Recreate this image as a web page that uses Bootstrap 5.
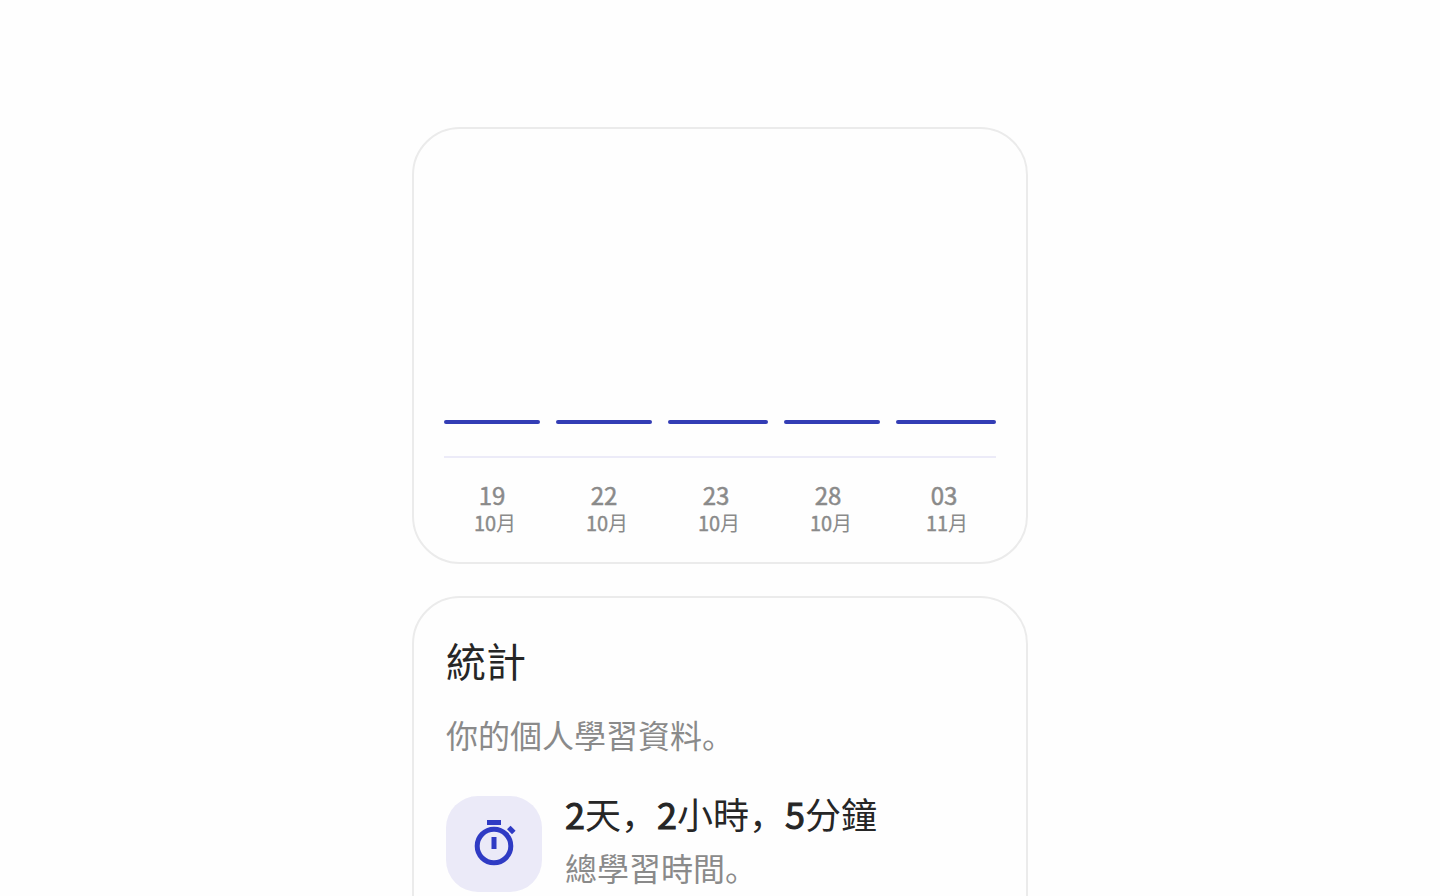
<!DOCTYPE html>
<html lang="zh">
<head>
<meta charset="utf-8">
<meta name="viewport" content="width=device-width, initial-scale=1">
<title>統計</title>
<link href="https://cdn.jsdelivr.net/npm/bootstrap@5.3.0/dist/css/bootstrap.min.css" rel="stylesheet">
<style>
  body { background: #fefefe; color: #262626; font-family: "Noto Sans CJK SC", "Noto Sans CJK TC", sans-serif; }
  .stats-page { max-width: 616px; padding-top: 127px; }
  .panel { border: 2px solid #ebebeb; border-radius: 48px; background: #fefefe; }
  .muted-text { color: #8a8a8a; }
  .chart-panel { padding: 30px 30px 25px; }
  .bar-plot { display: grid; grid-template-columns: 24fr 24fr 25fr 24fr 25fr; height: 265px; align-items: end; gap: 16px; }
  .study-bar { height: 4px; border-radius: 2px; background: #333db5; }
  .axis-line { height: 2px; margin-top: 32px; background: #ecebf8; }
  .axis-labels { display: grid; grid-template-columns: 12fr 12fr 12fr 12fr 13fr; column-gap: 16px; margin-top: 23px; text-align: center; }
  .axis-day { font-size: 24px; line-height: 28px; }
  .axis-month { font-size: 20px; line-height: 28px; padding-left: 6px; }
  .axis-day, .digit { -webkit-text-stroke: 0.02em currentColor; }
  .stats-panel { padding: 30px 32px 96px; margin-top: 32px; }
  .stats-title { font-size: 40px; line-height: 64px; font-weight: 400; }
  .stats-intro { font-size: 32px; line-height: 48px; margin-top: 18px; }
  .stat-item { margin-top: 38px; gap: 23px; }
  .stat-icon { width: 96px; height: 96px; border-radius: 32px; background: #ebeaf8; }
  .stat-text { margin-top: -5px; }
  .stat-value { font-size: 36px; line-height: 44px; }
  .stat-value .digit { -webkit-text-stroke-width: 1px; }
  .stat-caption { font-size: 32px; line-height: 48px; margin-top: 8px; }
</style>
</head>
<body>
<main class="container stats-page px-0 pb-5 d-flex flex-column">
  <section class="panel chart-panel" aria-label="學習時間">
    <div class="bar-plot">
      <div class="study-bar"></div>
      <div class="study-bar"></div>
      <div class="study-bar"></div>
      <div class="study-bar"></div>
      <div class="study-bar"></div>
    </div>
    <div class="axis-line"></div>
    <div class="axis-labels muted-text">
      <div><div class="axis-day">19</div><div class="axis-month"><span class="digit">10</span>月</div></div>
      <div><div class="axis-day">22</div><div class="axis-month"><span class="digit">10</span>月</div></div>
      <div><div class="axis-day">23</div><div class="axis-month"><span class="digit">10</span>月</div></div>
      <div><div class="axis-day">28</div><div class="axis-month"><span class="digit">10</span>月</div></div>
      <div><div class="axis-day">03</div><div class="axis-month"><span class="digit">11</span>月</div></div>
    </div>
  </section>

  <section class="panel stats-panel">
    <h1 class="stats-title mb-0">統計</h1>
    <p class="stats-intro muted-text mb-0">你的個人學習資料。</p>
    <div class="stat-item d-flex align-items-start">
      <div class="stat-icon d-flex align-items-center justify-content-center flex-shrink-0">
        <svg width="48" height="48" viewBox="0 0 48 48" fill="none" stroke="#2f3bc4" stroke-width="5" aria-hidden="true">
          <circle cx="24" cy="26" r="16.8"/>
          <path d="M17 2.5h14M24 17v12"/>
          <path d="M38.8 7.4l5 5"/>
        </svg>
      </div>
      <div class="stat-text">
        <div class="stat-value"><span class="digit">2</span>天，<span class="digit">2</span>小時，<span class="digit">5</span>分鐘</div>
        <div class="stat-caption muted-text">總學習時間。</div>
      </div>
    </div>
  </section>
</main>
<script src="https://cdn.jsdelivr.net/npm/bootstrap@5.3.0/dist/js/bootstrap.bundle.min.js"></script>
</body>
</html>
